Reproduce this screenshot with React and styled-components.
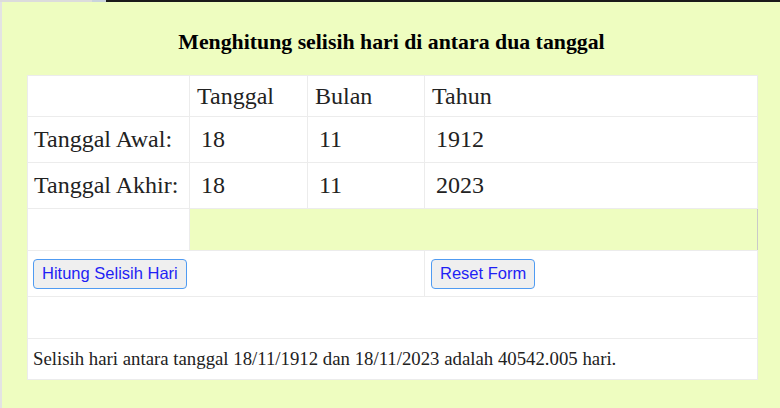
import React, { useState } from "react";
import styled, { createGlobalStyle } from "styled-components";

const GlobalStyle = createGlobalStyle`
  html, body {
    margin: 0;
    padding: 0;
    background: #e3e3e3;
    font-family: "Liberation Serif", "Times New Roman", serif;
  }
`;

// strip of the page behind the panel
const TopStrip = styled.div`
  display: flex;
  height: 2px;
`;

const StripPart = styled.div`
  width: ${(p) => p.w || "auto"};
  flex: ${(p) => (p.w ? "none" : 1)};
  background: ${(p) => p.color};
`;

const Panel = styled.div`
  margin-left: 2px;
  width: 778px;
  height: 406px;
  box-sizing: border-box;
  background: #eefdc0;
  padding: 28px 24px 0 25px;
`;

const Title = styled.h3`
  margin: 0 0 21px;
  text-align: center;
  font-size: 21.8px;
  line-height: 24px;
  font-weight: bold;
  color: #000;
`;

const Table = styled.table`
  border-collapse: collapse;
  table-layout: fixed;
  width: 730px;
  background: #fff;
  color: #222;
`;

const Row = styled.tr`
  height: ${(p) => p.h}px;
`;

const Cell = styled.td`
  border: 1px solid #ececec;
  padding: 0 ${(p) => p.pad ?? 8}px;
  font-size: ${(p) => p.size ?? 24}px;
  vertical-align: middle;
  white-space: nowrap;
`;

const FillCell = styled.td`
  background: #eefdc0;
  border: 1px solid #ececec;
  border-right: 1px solid #c9c9c9;
`;

const NumInput = styled.input`
  width: 100%;
  box-sizing: border-box;
  border: none;
  outline: none;
  background: transparent;
  padding: 0 4px 0 3px;
  font-family: "Liberation Serif", "Times New Roman", serif;
  font-size: 24px;
  color: #222;
`;

const Button = styled.button`
  height: 30px;
  padding: 0 8px;
  border: 1px solid #4f9bf2;
  border-radius: 4px;
  background: #efefef;
  color: #1f1ff5;
  font-family: "Liberation Sans", Arial, sans-serif;
  font-size: 16.5px;
  cursor: pointer;
`;

const App = () => {
  const [awal, setAwal] = useState({ d: "18", m: "11", y: "1912" });
  const [akhir, setAkhir] = useState({ d: "18", m: "11", y: "2023" });

  return (
    <>
      <GlobalStyle />
      <TopStrip>
        <StripPart w="92px" color="#dcdcdc" />
        <StripPart w="14px" color="#c9d3dc" />
        <StripPart color="#1a1a1a" />
      </TopStrip>
      <Panel>
        <Title>Menghitung selisih hari di antara dua tanggal</Title>
        <Table>
          <colgroup>
            <col style={{ width: 162 }} />
            <col style={{ width: 118 }} />
            <col style={{ width: 117 }} />
            <col style={{ width: 333 }} />
          </colgroup>
          <tbody>
            <Row h={41}>
              <Cell />
              <Cell pad={7}>Tanggal</Cell>
              <Cell pad={7}>Bulan</Cell>
              <Cell pad={7}>Tahun</Cell>
            </Row>
            <Row h={46}>
              <Cell pad={6}>Tanggal Awal:</Cell>
              <Cell>
                <NumInput value={awal.d} onChange={(e) => setAwal({ ...awal, d: e.target.value })} />
              </Cell>
              <Cell>
                <NumInput value={awal.m} onChange={(e) => setAwal({ ...awal, m: e.target.value })} />
              </Cell>
              <Cell>
                <NumInput value={awal.y} onChange={(e) => setAwal({ ...awal, y: e.target.value })} />
              </Cell>
            </Row>
            <Row h={46}>
              <Cell pad={6}>Tanggal Akhir:</Cell>
              <Cell>
                <NumInput value={akhir.d} onChange={(e) => setAkhir({ ...akhir, d: e.target.value })} />
              </Cell>
              <Cell>
                <NumInput value={akhir.m} onChange={(e) => setAkhir({ ...akhir, m: e.target.value })} />
              </Cell>
              <Cell>
                <NumInput value={akhir.y} onChange={(e) => setAkhir({ ...akhir, y: e.target.value })} />
              </Cell>
            </Row>
            <Row h={42}>
              <Cell />
              <FillCell colSpan={3} />
            </Row>
            <Row h={46}>
              <Cell colSpan={3} pad={5}>
                <Button>Hitung Selisih Hari</Button>
              </Cell>
              <Cell pad={6}>
                <Button>Reset Form</Button>
              </Cell>
            </Row>
            <Row h={42}>
              <Cell colSpan={4} />
            </Row>
            <Row h={41}>
              <Cell colSpan={4} size={18.8} pad={5}>
                Selisih hari antara tanggal 18/11/1912 dan 18/11/2023 adalah 40542.005 hari.
              </Cell>
            </Row>
          </tbody>
        </Table>
      </Panel>
    </>
  );
};

export default App;
